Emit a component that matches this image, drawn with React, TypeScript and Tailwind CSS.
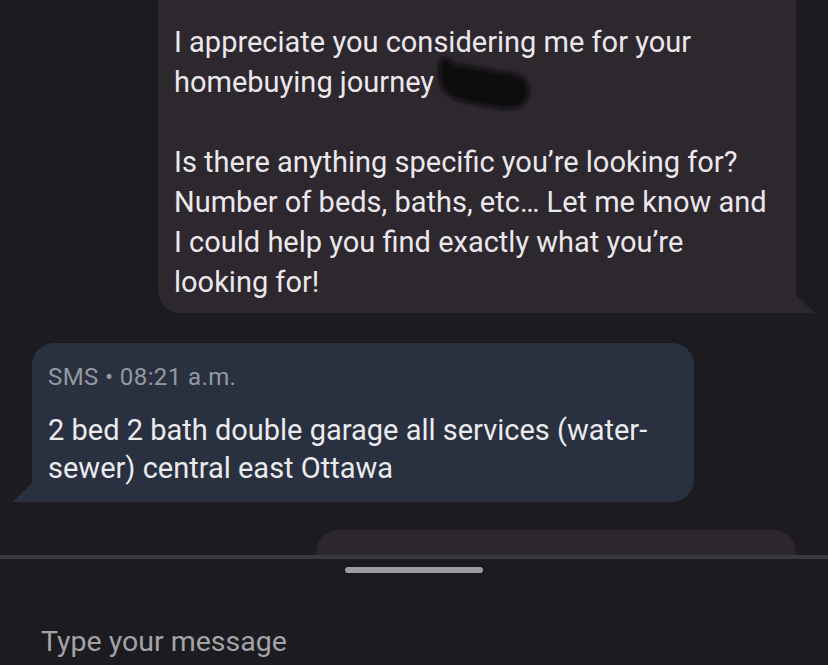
import React from "react";

export default function App() {
  return (
    <div
      className="w-[828px] h-[665px] overflow-hidden bg-[#1c1b1f] flex flex-col"
      style={{ fontFamily: "Roboto, 'Noto Sans', sans-serif" }}
    >
      <div className="h-[555px] overflow-hidden flex flex-col">
        {/* Outgoing bubble */}
        <div className="relative self-end mr-[32px] mt-[-30px] w-[638px] bg-[#2d272e] rounded-[22px] rounded-br-none pl-[16px] pr-[8px] pt-[52px] pb-[11px]">
          <div className="text-[29px] leading-[40px] text-[#ebe8ec] whitespace-nowrap">
            <div>I appreciate you considering me for your</div>
            <div>homebuying journey</div>
            <div>&nbsp;</div>
            <div>Is there anything specific you’re looking for?</div>
            <div>Number of beds, baths, etc… Let me know and</div>
            <div>I could help you find exactly what you’re</div>
            <div>looking for!</div>
          </div>
          <svg className="absolute left-[278px] top-[84px]" width="100" height="60" viewBox="0 0 100 60">
            <defs>
              <filter id="b" x="-20%" y="-20%" width="140%" height="140%">
                <feGaussianBlur stdDeviation="2" />
              </filter>
            </defs>
            <path
              d="M6 4 C10 2 14 6 18 10 C30 12 48 14 62 18 C78 18 90 22 92 32 C94 42 90 52 80 54 C64 56 52 52 40 50 C26 48 12 44 6 34 C2 24 2 10 6 4 Z"
              fill="#0c070e"
              filter="url(#b)"
            />
          </svg>
          <svg className="absolute right-[-19px] bottom-0" width="19" height="18" viewBox="0 0 19 18">
            <path d="M0 0 L19 18 L0 18 Z" fill="#2d272e" />
          </svg>
        </div>

        {/* Incoming bubble */}
        <div className="relative self-start ml-[32px] mt-[30px] w-[662px] bg-[#29303f] rounded-[22px] rounded-bl-none pl-[16px] pr-[8px] pt-[19px] pb-[15px]">
          <div className="text-[24px] leading-[30px] text-[#9598a0] tracking-[0.4px]">SMS • 08:21 a.m.</div>
          <div className="mt-[19px] text-[29px] leading-[38px] text-[#ebebee] whitespace-nowrap">
            <div>2 bed 2 bath double garage all services (water-</div>
            <div>sewer) central east Ottawa</div>
          </div>
          <svg className="absolute left-[-20px] bottom-0" width="20" height="19" viewBox="0 0 20 19">
            <path d="M20 0 L0 19 L20 19 Z" fill="#29303f" />
          </svg>
        </div>

        {/* Next outgoing bubble (cut) */}
        <div className="self-end mr-[32px] mt-[28px] w-[480px] h-[60px] shrink-0 bg-[#2d262e] rounded-t-[22px]" />
      </div>

      {/* Composer */}
      <div className="flex-1 border-t-4 border-[#3a3a3e] bg-[#1c1b1f] flex flex-col">
        <div className="mt-[8px] self-center w-[138px] h-[6px] rounded-full bg-[#9c9ca1]" />
        <div className="mt-[53px] pl-[41px] text-[28.5px] leading-[32px] text-[#a2a2a7]">Type your message</div>
      </div>
    </div>
  );
}
